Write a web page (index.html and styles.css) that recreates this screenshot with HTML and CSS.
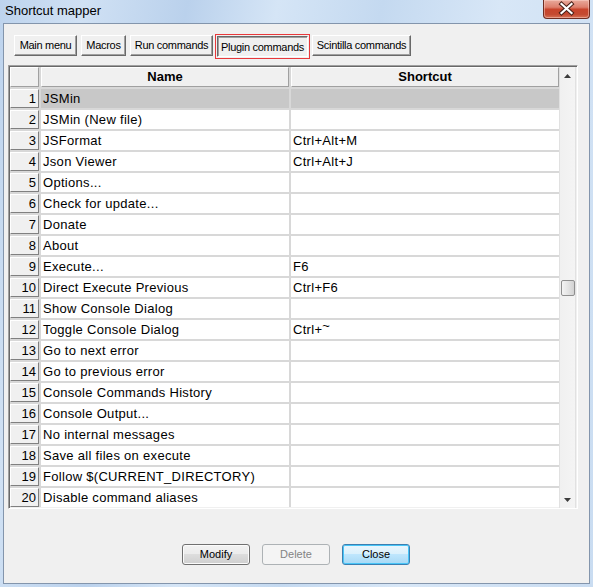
FILE: index.html
```html
<!DOCTYPE html>
<html>
<head>
<meta charset="utf-8">
<link rel="stylesheet" href="styles.css">
</head>
<body>
<div class="window">
  <div class="titlebar">
    <span class="title">Shortcut mapper</span>
    <div class="close-btn">
      <svg width="45" height="18" viewBox="0 0 45 18">
        <path d="M17.5 4 L27.5 13 M27.5 4 L17.5 13" stroke="#4a2018" stroke-width="4.2" stroke-linecap="square" fill="none"/>
        <path d="M17.5 4 L27.5 13 M27.5 4 L17.5 13" stroke="#ffffff" stroke-width="2.2" stroke-linecap="square" fill="none"/>
      </svg>
    </div>
  </div>
  <div class="client">
    <div class="tabs">
      <div class="tab t-main">Main menu</div>
      <div class="tab t-macros">Macros</div>
      <div class="tab t-run">Run commands</div>
      <div class="tab t-plugin active">Plugin commands</div>
      <div class="tab t-scintilla">Scintilla commands</div>
    </div>
    <div class="gridbox">
      <div class="table">
        <div class="hcell corner"></div><div class="hcell">Name</div><div class="hcell">Shortcut</div>
        <div class="num">1</div><div class="cell sel">JSMin</div><div class="cell sel"></div>
        <div class="num">2</div><div class="cell">JSMin (New file)</div><div class="cell"></div>
        <div class="num">3</div><div class="cell">JSFormat</div><div class="cell">Ctrl+Alt+M</div>
        <div class="num">4</div><div class="cell">Json Viewer</div><div class="cell">Ctrl+Alt+J</div>
        <div class="num">5</div><div class="cell">Options...</div><div class="cell"></div>
        <div class="num">6</div><div class="cell">Check for update...</div><div class="cell"></div>
        <div class="num">7</div><div class="cell">Donate</div><div class="cell"></div>
        <div class="num">8</div><div class="cell">About</div><div class="cell"></div>
        <div class="num">9</div><div class="cell">Execute...</div><div class="cell">F6</div>
        <div class="num">10</div><div class="cell">Direct Execute Previous</div><div class="cell">Ctrl+F6</div>
        <div class="num">11</div><div class="cell">Show Console Dialog</div><div class="cell"></div>
        <div class="num">12</div><div class="cell">Toggle Console Dialog</div><div class="cell">Ctrl+<span class="tilde">~</span></div>
        <div class="num">13</div><div class="cell">Go to next error</div><div class="cell"></div>
        <div class="num">14</div><div class="cell">Go to previous error</div><div class="cell"></div>
        <div class="num">15</div><div class="cell">Console Commands History</div><div class="cell"></div>
        <div class="num">16</div><div class="cell">Console Output...</div><div class="cell"></div>
        <div class="num">17</div><div class="cell">No internal messages</div><div class="cell"></div>
        <div class="num">18</div><div class="cell">Save all files on execute</div><div class="cell"></div>
        <div class="num">19</div><div class="cell">Follow $(CURRENT_DIRECTORY)</div><div class="cell"></div>
        <div class="num">20</div><div class="cell">Disable command aliases</div><div class="cell"></div>
      </div>
      <div class="vscroll">
        <div class="sb-btn">
          <svg width="7" height="4" viewBox="0 0 7 4"><polygon points="0,4 3.5,0 7,4" fill="#3c3c3c"/></svg>
        </div>
        <div class="sb-track"><div class="sb-thumb"></div></div>
        <div class="sb-btn">
          <svg width="7" height="4" viewBox="0 0 7 4"><polygon points="0,0 7,0 3.5,4" fill="#3c3c3c"/></svg>
        </div>
      </div>
    </div>
    <div class="buttons">
      <div class="btn">Modify</div>
      <div class="btn disabled">Delete</div>
      <div class="btn default">Close</div>
    </div>
  </div>
</div>
</body>
</html>
```
FILE: styles.css
```css
html, body {
  margin: 0;
  padding: 0;
}
body {
  width: 593px;
  height: 587px;
  overflow: hidden;
  font-family: "Liberation Sans", Arial, sans-serif;
  background: linear-gradient(100deg, #bdd3ed 0%, #d0e1f4 12%, #bad1ec 27%, #d5e5f6 40%, #c4d9f0 55%, #d8e7f7 72%, #c9dcf1 100%);
}
.window {
  display: flex;
  flex-direction: column;
  height: 587px;
}
.titlebar {
  height: 23px;
  flex-shrink: 0;
  display: flex;
  align-items: flex-start;
}
.title {
  font-size: 13px;
  line-height: 13px;
  margin: 4px 0 0 5px;
  color: #000;
}
.close-btn {
  margin-left: auto;
  margin-right: 3px;
  width: 45px;
  height: 18px;
  border: 1px solid #6e2d22;
  border-top: none;
  border-radius: 0 0 4px 4px;
  background: linear-gradient(#e9aa9c 0%, #dd7f6d 40%, #c8442c 52%, #c44a31 80%, #d77358 100%);
  box-shadow: inset 0 0 0 1px rgba(255, 220, 210, 0.45);
  display: flex;
}
.client {
  margin: 0 3px 3px 3px;
  flex: 1;
  border: 1px solid #8395ac;
  background: #f0f0f0;
  display: flex;
  flex-direction: column;
}
.tabs {
  display: flex;
  gap: 4px;
  margin: 11px 0 0 10px;
  height: 21px;
}
.tab {
  height: 21px;
  box-sizing: border-box;
  padding: 0;
  font-size: 11px;
  letter-spacing: -0.3px;
  line-height: 19px;
  text-align: center;
  color: #000;
  background: #f0f0f0;
  border: 1px solid;
  border-color: #ffffff #696969 #696969 #ffffff;
  box-shadow: inset -1px -1px #a0a0a0;
  white-space: nowrap;
}
.t-main { width: 63px; }
.t-macros { width: 45px; }
.t-run { width: 83px; }
.t-plugin { width: 91px; }
.t-scintilla { width: 99px; }
.tab.active {
  margin-top: 1px;
  border-color: #696969 #ffffff #ffffff #696969;
  box-shadow: inset 1px 1px #a0a0a0;
  padding-top: 1px;
  outline: 1px solid #e8383b;
  outline-offset: 1px;
}
.gridbox {
  margin: 9px 0 0 4px;
  width: 570px;
  height: 444px;
  box-sizing: border-box;
  border: 1px solid;
  border-color: #a0a0a0 #ffffff #ffffff #a0a0a0;
  box-shadow: inset 1px 1px #696969;
  padding: 1px 0 0 1px;
  display: flex;
  background: #f0f0f0;
}
.table {
  display: grid;
  grid-template-columns: 29px 248px 268px;
  grid-template-rows: 20px repeat(20, 19px);
  gap: 2px;
  align-content: start;
  width: 549px;
  height: 440px;
  background: #d8d8d8;
}
.hcell {
  background: #f0f0f0;
  box-sizing: border-box;
  border: 1px solid;
  border-color: #ffffff #a0a0a0 #a0a0a0 #ffffff;
  font-size: 13px;
  font-weight: bold;
  line-height: 18px;
  text-align: center;
  color: #000;
}
.num {
  background: #f0f0f0;
  box-sizing: border-box;
  border: 1px solid;
  border-color: #ffffff #808080 #808080 #ffffff;
  font-size: 13px;
  line-height: 17px;
  text-align: right;
  padding-right: 2px;
  color: #000;
}
.cell {
  background: #ffffff;
  padding-left: 2px;
  font-size: 13px;
  line-height: 19px;
  height: 19px;
  letter-spacing: 0.3px;
  white-space: nowrap;
  color: #000;
}
.cell.sel {
  background: #c8c8c8;
}
.tilde {
  position: relative;
  top: -4px;
}
.vscroll {
  width: 17px;
  display: flex;
  flex-direction: column;
  background: linear-gradient(to right, #e1e1e1 0, #e1e1e1 1px, #f0f0f0 1px, #f4f4f4 16px, #e1e1e1 16px);
}
.sb-btn {
  height: 17px;
  flex-shrink: 0;
  display: flex;
  align-items: center;
  justify-content: center;
}
.sb-track {
  flex: 1;
}
.sb-thumb {
  margin: 196px auto 0;
  width: 14px;
  height: 16px;
  box-sizing: border-box;
  border: 1px solid #8f8f8f;
  border-radius: 2px;
  background: linear-gradient(to right, #f4f4f4, #e4e4e4 50%, #d2d2d2);
}
.buttons {
  display: flex;
  gap: 12px;
  margin: 35px 0 0 178px;
}
.btn {
  width: 68px;
  height: 21px;
  box-sizing: border-box;
  border: 1px solid #707070;
  border-radius: 3px;
  font-size: 11px;
  line-height: 19px;
  text-align: center;
  color: #000;
  background: linear-gradient(#f2f2f2 0%, #ebebeb 50%, #dddddd 50%, #cfcfcf 100%);
  box-shadow: inset 0 0 0 1px #fbfbfb;
}
.btn.disabled {
  border-color: #adb2b5;
  color: #838383;
  background: #f4f4f4;
  box-shadow: none;
}
.btn.default {
  border-color: #3c7fb1;
  background: linear-gradient(#eaf6fd 0%, #d9f0fc 50%, #bee6fd 50%, #a7d9f5 100%);
  box-shadow: inset 0 0 0 1px #48c5f7;
}
```
